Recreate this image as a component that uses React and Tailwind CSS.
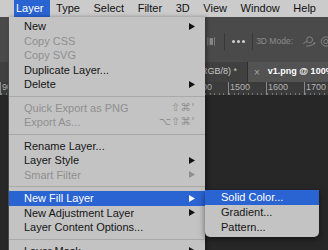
const MENU_BAR = ["Type", "Select", "Filter", "3D", "View", "Window", "Help"];

const LAYER_MENU = [
  { label: "New", arrow: true },
  { label: "Copy CSS", disabled: true },
  { label: "Copy SVG", disabled: true },
  { label: "Duplicate Layer..." },
  { label: "Delete", arrow: true },
  { sep: true },
  { label: "Quick Export as PNG", disabled: true, shortcut: "⇧⌘'" },
  { label: "Export As...", disabled: true, shortcut: "⌥⇧⌘'" },
  { sep: true },
  { label: "Rename Layer..." },
  { label: "Layer Style", arrow: true },
  { label: "Smart Filter", disabled: true, arrow: true },
  { sep: true },
  { label: "New Fill Layer", arrow: true, active: true },
  { label: "New Adjustment Layer", arrow: true },
  { label: "Layer Content Options..." },
  { sep: true },
  { label: "Layer Mask", arrow: true },
];

const FILL_MENU = [
  { label: "Solid Color...", active: true },
  { label: "Gradient..." },
  { label: "Pattern..." },
];

const RULER = [900, 1000, 1100, 1200, 1300, 1400, 1500, 1600, 1700];

function Arrow({ color }) {
  return (
    <svg width="6" height="7" viewBox="0 0 6 7" className="shrink-0">
      <polygon points="0,0 6,3.5 0,7" fill={color} />
    </svg>
  );
}

function MenuItem({ label, disabled, arrow, shortcut, active }) {
  const tone = active
    ? "bg-[#2a63d2] text-white"
    : disabled
    ? "text-[#8f8f8f]"
    : "text-[#151515]";
  return (
    <div className={`flex items-center h-[14.5px] pl-[15px] pr-[10px] ${tone}`}>
      <span className="flex-1 whitespace-nowrap">{label}</span>
      {shortcut && (
        <span className="text-[10.5px] text-[#8f8f8f] font-['DejaVu_Sans',sans-serif] tracking-[0.5px]">
          {shortcut}
        </span>
      )}
      {arrow && (
        <Arrow color={active ? "#ffffff" : disabled ? "#8f8f8f" : "#111111"} />
      )}
    </div>
  );
}

function OptionsBar() {
  return (
    <div className="h-[45px] bg-[#4a4a4a] flex items-center pl-[207px] pt-[3px]">
      <svg width="10" height="11" viewBox="0 0 10 11">
        <rect x="0.5" y="0.5" width="1" height="10" fill="#8a8a8a" />
        <rect x="3" y="1.5" width="4" height="8" fill="#8a8a8a" />
        <rect x="8.5" y="0.5" width="1" height="10" fill="#8a8a8a" />
      </svg>
      <div className="w-px h-[17px] bg-[#383838] ml-[9px]" />
      <div className="flex gap-[2px] ml-[7px]">
        <span className="w-[3px] h-[3px] rounded-full bg-[#d0d0d0]" />
        <span className="w-[3px] h-[3px] rounded-full bg-[#d0d0d0]" />
        <span className="w-[3px] h-[3px] rounded-full bg-[#d0d0d0]" />
      </div>
      <div className="w-px h-[17px] bg-[#383838] ml-[7px]" />
      <span className="ml-[3px] text-[8.5px] text-[#8c8c8c] whitespace-nowrap">3D Mode:</span>
      <svg width="16" height="13" viewBox="0 0 16 13" className="ml-[9px]" fill="none" stroke="#8a8a8a" strokeWidth="1">
        <circle cx="9" cy="4.5" r="3.5" />
        <path d="M2 9.5c0-2 2-3 4-2.5M5 12c3 0 9-1 10-4" />
        <path d="M13 9l2-1 0 2" />
      </svg>
      <svg width="10" height="13" viewBox="0 0 10 13" className="ml-[4px]" fill="none" stroke="#8a8a8a" strokeWidth="1">
        <circle cx="7" cy="6.5" r="5.5" />
        <circle cx="7" cy="6.5" r="2.5" />
      </svg>
    </div>
  );
}

function TabRow() {
  return (
    <div className="h-[20px] flex text-[9px] whitespace-nowrap">
      <div className="w-[247px] bg-[#404040] flex items-center justify-end pr-[10px] overflow-hidden text-[#c9c9c9]">
        <span>server.psd @ 66.7% (Layer 1, RGB/8) *</span>
      </div>
      <div className="flex-1 bg-[#535353] border-l border-[#2e2e2e] flex items-center overflow-hidden">
        <span className="ml-[6px] text-[#a8a8a8] text-[10px]">×</span>
        <span className="ml-[8px] text-white font-bold">v1.png @ 100% (RGB/8)</span>
      </div>
    </div>
  );
}

function Ruler() {
  return (
    <div className="h-[13px] bg-[#3b3b3b] flex overflow-hidden">
      {RULER.map((n) => (
        <div key={n} className="w-[38px] shrink-0 border-l border-[#8a8a8a] flex flex-col">
          <span className="text-[9px] leading-[10px] pl-[1px] text-[#b3b3b3]">{n}</span>
          <div className="flex-1 flex items-end">
            {[0, 1, 2, 3, 4, 5, 6, 7].map((t) => (
              <span key={t} className="w-[4.75px] h-[2px] border-l border-[#777777]" />
            ))}
          </div>
        </div>
      ))}
    </div>
  );
}

export default function App() {
  return (
    <div className="relative w-[328px] h-[250px] overflow-hidden bg-[#272727] flex flex-col font-['Liberation_Sans',Arial,sans-serif] text-[11px]">
      <div className="h-[17px] bg-[#cbcbcb] flex items-center pl-[14px] text-[#111111] leading-[17px]">
        <span className="bg-[#2a63d2] text-white pl-[2px] pr-[6px]">Layer</span>
        <div className="flex gap-[13.6px] ml-[6.5px]">
          {MENU_BAR.map((m) => (
            <span key={m}>{m}</span>
          ))}
        </div>
      </div>
      <OptionsBar />
      <TabRow />
      <Ruler />
      <div className="flex-1 bg-[#272727]" />

      <div className="absolute left-[8px] top-[17px] w-[197px] h-[250px] bg-[#c3c3c3] pt-[2px] border-l border-[#4a4a4a] shadow-[2px_0_4px_rgba(0,0,0,0.35)]">
        {LAYER_MENU.map((item, i) =>
          item.sep ? (
            <div key={i} className="h-[9px] flex items-center">
              <div className="w-full h-px bg-[#a9a9a9]" />
            </div>
          ) : (
            <MenuItem key={i} {...item} />
          )
        )}
      </div>

      <div className="absolute left-[205px] top-[190px] w-[114px] bg-[#c3c3c3] pb-[2px] rounded-b-[5px] shadow-[0_2px_6px_rgba(0,0,0,0.5)] overflow-hidden">
        {FILL_MENU.map((item) => (
          <div
            key={item.label}
            className={`h-[15px] flex items-center pl-[16px] ${
              item.active ? "bg-[#2a63d2] text-white" : "text-[#151515]"
            }`}
          >
            {item.label}
          </div>
        ))}
      </div>
    </div>
  );
}
